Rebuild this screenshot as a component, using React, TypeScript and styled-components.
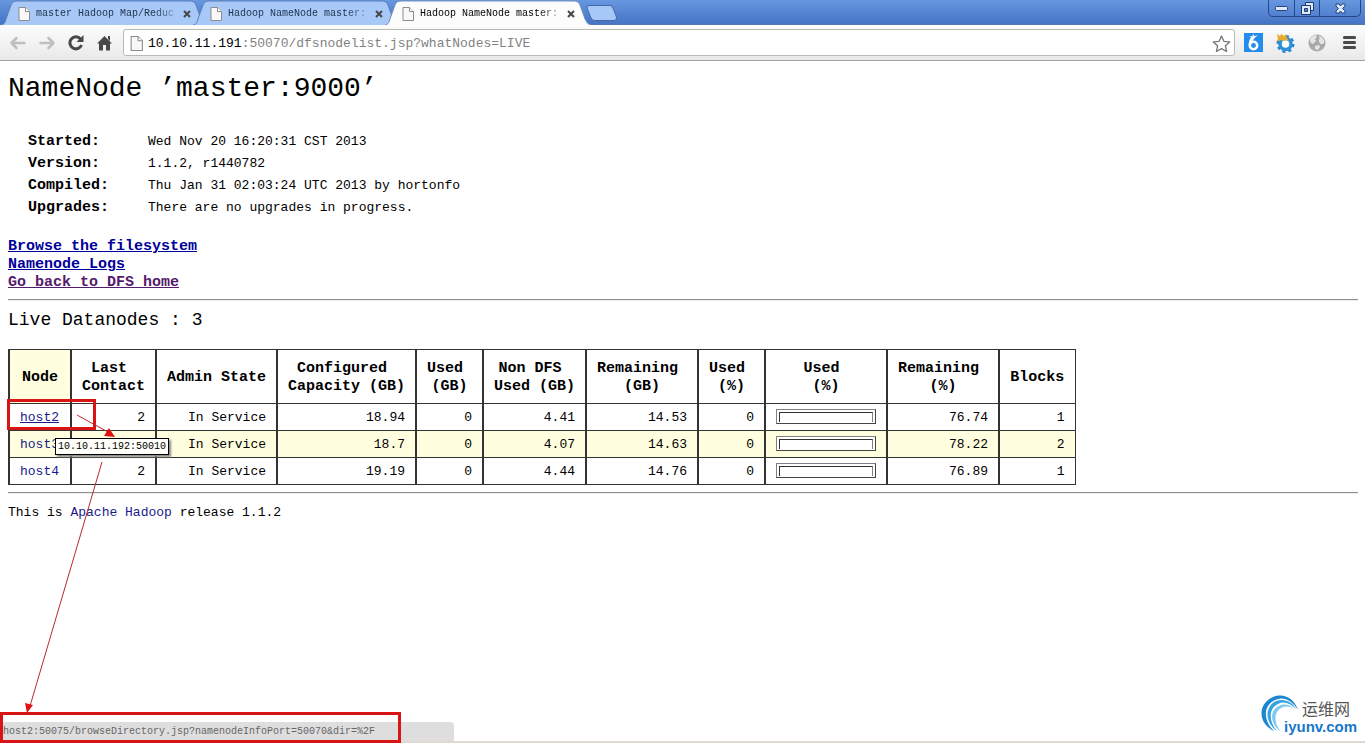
import React from 'react';
import styled, { createGlobalStyle, css } from 'styled-components';

const GlobalStyle = createGlobalStyle`
  * { box-sizing: border-box; }
  html, body { margin: 0; padding: 0; background: #fff; }
  body { font-family: "Liberation Mono", "Noto Sans CJK SC", monospace; font-size: 13px; line-height: 18px; color: #000; }
  button, input { font-family: inherit; }
`;

const Window = styled.div`
  position: relative;
  min-height: 100vh;
  display: flex;
  flex-direction: column;
  overflow: hidden;
`;

const TitleBar = styled.header`
  display: flex;
  justify-content: space-between;
  align-items: flex-start;
  height: 25px;
  padding-left: 1px;
  background: linear-gradient(#6797df, #4674c6);
  border-bottom: 1px solid #5877a8;
`;

const TabStrip = styled.nav`
  display: flex;
  height: 25px;
`;

const Tab = styled.div<{ $active?: boolean }>`
  position: relative;
  z-index: ${p => (p.$active ? 2 : 1)};
  display: flex;
  align-items: center;
  gap: 6px;
  width: 206px;
  height: 25px;
  margin-right: -14px;
  padding: 2px 14px 0 17px;
  font-size: 10px;
  line-height: 14px;
  color: ${p => (p.$active ? '#000' : '#223550')};
`;

const TabShape = styled.svg`
  position: absolute;
  inset: 0;
  width: 100%;
  height: 100%;
`;

const TabTitle = styled.a`
  position: relative;
  flex: 1;
  white-space: nowrap;
  color: inherit;
  text-decoration: none;
  mask-image: linear-gradient(to right, #000 85%, rgba(0, 0, 0, 0.3));
`;

const iconButton = css`
  display: flex;
  align-items: center;
  justify-content: center;
  padding: 0;
  border: 0;
  background: none;
`;

const TabClose = styled.button`
  ${iconButton}
  position: relative;
  width: 12px;
  height: 16px;
`;

const NewTab = styled.button`
  ${iconButton}
  width: 34px;
  height: 20px;
  margin: 3px 0 0 8px;
`;

const WindowControls = styled.div`
  display: flex;
  height: 17px;
  margin-right: 4px;
  border: 1px solid #26468a;
  border-top: 0;
  border-radius: 0 0 5px 5px;
`;

const WindowButton = styled.button<{ $wide?: boolean }>`
  ${iconButton}
  width: ${p => (p.$wide ? 41 : 25)}px;
  & + & { border-left: 1px solid #26468a; }
`;

const Toolbar = styled.div`
  display: flex;
  align-items: center;
  height: 36px;
  padding: 0 6px 0 8px;
  gap: 8px;
  background: linear-gradient(#fcfcfc, #e9e9e9);
  border-bottom: 1px solid #a3a3a3;
`;

const NavButtons = styled.div`
  display: flex;
  gap: 9px;
`;

const ToolButton = styled.button`
  ${iconButton}
  width: 20px;
  height: 20px;
`;

const AddressBox = styled.form`
  position: relative;
  flex: 1;
  display: flex;
  align-items: center;
  gap: 5px;
  height: 27px;
  padding: 2px 3px 0 6px;
  background: #fff;
  border: 1px solid #b9bab2;
  border-radius: 3px;
`;

const AddressField = styled.div`
  position: relative;
  flex: 1;
  line-height: 20px;
  color: #828282;
`;

const AddressInput = styled.input`
  position: absolute;
  inset: 0;
  width: 100%;
  padding: 0;
  border: 0;
  outline: 0;
  background: transparent;
  color: transparent;
  font-size: 13px;
`;

const HostPart = styled.span`
  color: #000;
`;

const Extensions = styled.div`
  display: flex;
  gap: 12px;
`;

const Page = styled.main`
  flex: 1;
  padding: 8px 7px 0 8px;
`;

const Title = styled.h1`
  margin: 0 0 22px;
  font-size: 28px;
  line-height: 40px;
  font-weight: normal;
`;

const InfoTable = styled.table`
  margin: 0 0 19px 20px;
  border-collapse: collapse;
`;

const InfoLabel = styled.th`
  width: 120px;
  padding: 0;
  font-size: 15px;
  line-height: 22px;
  text-align: left;
`;

const InfoValue = styled.td`
  padding: 0;
  line-height: 22px;
`;

const Links = styled.nav`
  display: flex;
  flex-direction: column;
  align-items: flex-start;
`;

const PageLink = styled.a<{ $visited?: boolean }>`
  font-size: 15px;
  line-height: 18px;
  font-weight: bold;
  color: ${p => (p.$visited ? '#551a6b' : '#00009c')};
`;

const Rule = styled.hr`
  height: 2px;
  margin: 7px 0;
  border: 0;
  border-top: 1px solid #8f8f8f;
  border-bottom: 1px solid #eee;
`;

const SectionTitle = styled.h2`
  margin: 0 0 17px;
  font-size: 18px;
  line-height: 24px;
  font-weight: normal;
`;

const NodeTable = styled.table`
  width: 1066px;
  table-layout: fixed;
  border-collapse: collapse;
  border: 1px solid #333;
`;

const HeadCell = styled.th<{ $sorted?: boolean }>`
  height: 54px;
  padding: 2px 0 0;
  border: 1px solid #333;
  border-width: 1px 1px 1px 2px;
  background: ${p => (p.$sorted ? '#ffffe0' : '#fff')};
  font-size: 15px;
  line-height: 18px;
  white-space: pre;
`;

const NodeRow = styled.tr<{ $shaded?: boolean }>`
  background: ${p => (p.$shaded ? '#ffffe0' : '#fff')};
`;

const Cell = styled.td<{ $left?: boolean }>`
  height: 27px;
  padding: 2px 10px 0;
  border: 1px solid #333;
  border-left-width: 2px;
  line-height: 18px;
  text-align: ${p => (p.$left ? 'left' : 'right')};
  white-space: nowrap;
`;

const NodeLink = styled.a<{ $hovered?: boolean }>`
  color: #1a1a8c;
  text-decoration: ${p => (p.$hovered ? 'underline' : 'none')};
`;

const Gauge = styled.div`
  height: 15px;
  margin: 0 0 4px;
  padding: 2px;
  border: 1px solid #444;
  border-top-color: #808080;
  border-left-color: #808080;
  background: #fff;
`;

const GaugeInner = styled.div`
  height: 10px;
  border: 1px solid #808080;
  border-top-color: #333;
  border-left-color: #333;
  border-bottom: 0;
`;

const Footer = styled.p`
  margin: 0;
  padding-top: 3px;
`;

const BottomEdge = styled.div`
  height: 2px;
  background: #ded9d2;
`;

const Tooltip = styled.div`
  position: absolute;
  left: 55px;
  top: 438px;
  padding: 0 2px;
  border: 1px solid #000;
  background: #fffffa;
  box-shadow: 2px 2px 2px #888;
  font-size: 10px;
  line-height: 15px;
`;

const StatusBubble = styled.div`
  position: absolute;
  left: 0;
  bottom: 2px;
  width: 454px;
  height: 19px;
  padding-left: 3px;
  border-radius: 0 4px 0 0;
  background: #dedede;
  color: #666;
  font-size: 10px;
  line-height: 19px;
  white-space: nowrap;
`;

const Mark = styled.div<{ $x: number; $w: number; $h: number }>`
  position: absolute;
  left: ${p => p.$x}px;
  width: ${p => p.$w}px;
  height: ${p => p.$h}px;
  border: 3px solid #d81414;
  pointer-events: none;
`;

const HostMark = styled(Mark)`
  top: 399px;
`;

const StatusMark = styled(Mark)`
  bottom: 0;
`;

const Arrows = styled.svg`
  position: absolute;
  left: 0;
  top: 0;
  pointer-events: none;
`;

const Watermark = styled.svg`
  position: absolute;
  right: 4px;
  bottom: 4px;
`;

const DocSvg = styled.svg`
  position: relative;
  flex: none;
`;

const DocIcon = ({ h = 14 }: { h?: number }) => (
  <DocSvg width={h - 2} height={h} viewBox="0 0 12 14">
    <path d="M1 .5h6.5l4 4v9H1z" fill="#f8f8f8" stroke="#8c8c8c" />
    <path d="M7.5.5v4h4" fill="#fff" stroke="#8c8c8c" />
  </DocSvg>
);

const tabs = [
  { title: 'master Hadoop Map/Reduc', active: false },
  { title: 'Hadoop NameNode master:', active: false },
  { title: 'Hadoop NameNode master:', active: true },
];

const info = [
  ['Started:', 'Wed Nov 20 16:20:31 CST 2013'],
  ['Version:', '1.1.2, r1440782'],
  ['Compiled:', 'Thu Jan 31 02:03:24 UTC 2013 by hortonfo'],
  ['Upgrades:', 'There are no upgrades in progress.'],
];

const columns: [string, number][] = [
  ['Node', 62],
  ['Last \nContact', 85],
  ['Admin State', 121],
  ['Configured \nCapacity (GB)', 139],
  ['Used \n(GB)', 67],
  ['Non DFS \nUsed (GB)', 103],
  ['Remaining \n(GB)', 112],
  ['Used \n(%)', 67],
  ['Used \n(%)', 122],
  ['Remaining \n(%)', 112],
  ['Blocks', 76],
];

const nodes = [
  { name: 'host2', cells: ['2', 'In Service', '18.94', '0', '4.41', '14.53', '0'], rest: ['76.74', '1'] },
  { name: 'host3', cells: ['', 'In Service', '18.7', '0', '4.07', '14.63', '0'], rest: ['78.22', '2'] },
  { name: 'host4', cells: ['2', 'In Service', '19.19', '0', '4.44', '14.76', '0'], rest: ['76.89', '1'] },
];

const BrowserTab = ({ title, active }: { title: string; active: boolean }) => (
  <Tab $active={active}>
    <TabShape viewBox="0 0 206 25" preserveAspectRatio="none">
      <path
        d="M0 25C4 24 4 22 5 19L10 5Q11 1 15 1H190Q194 1 195 5L200 19C202 22 202 24 206 25"
        fill={active ? '#fcfcfc' : '#a8c9f8'}
        stroke={active ? '#708fbd' : '#587fb9'}
      />
    </TabShape>
    <DocIcon />
    <TabTitle href="#">{title}</TabTitle>
    <TabClose aria-label="Close tab">
      <svg width="8" height="8" viewBox="0 0 8 8" stroke="#474747" strokeWidth="2">
        <path d="M1 1l6 6M7 1L1 7" />
      </svg>
    </TabClose>
  </Tab>
);

export default function App() {
  return (
    <Window>
      <GlobalStyle />
      <TitleBar>
        <TabStrip>
          {tabs.map((t, i) => <BrowserTab key={i} {...t} />)}
          <NewTab aria-label="New tab">
            <svg width="34" height="20" viewBox="0 0 34 20">
              <path d="M4 2.5H25Q27 2.5 28 5L31.500 14Q32 17.500 29 17.500H10Q7 17.500 6 15L2 5Q1.500 2.500 4 2.500Z" fill="#a5c8f8" stroke="#4468a6" />
            </svg>
          </NewTab>
        </TabStrip>
        <WindowControls>
          <WindowButton aria-label="Minimize">
            <svg width="13" height="6" viewBox="0 0 13 6"><rect x=".5" y="1.500" width="12" height="4" rx="1" fill="#dfe9fa" stroke="#24447c" /></svg>
          </WindowButton>
          <WindowButton aria-label="Restore">
            <svg width="13" height="13" viewBox="0 0 13 13" stroke="#1f3c70" fill="#dfe9fa">
              <path d="M4.500.5h8v8h-8z" /><path d="M.5 3.500h9v9h-9z" /><path d="M3.500 6.500h3v3h-3z" fill="#5c88d4" />
            </svg>
          </WindowButton>
          <WindowButton $wide aria-label="Close">
            <svg width="13" height="11" viewBox="0 0 13 11" fill="none">
              <path d="M2 1h3l1.500 2L8 1h3v2L8.500 5.500 11 8v2H8L6.500 8 5 10H2V8l2.500-2.500L2 3z" fill="#dfe9fa" stroke="#24447c" />
            </svg>
          </WindowButton>
        </WindowControls>
      </TitleBar>

      <Toolbar>
        <NavButtons>
          <ToolButton aria-label="Back">
            <svg width="18" height="14" viewBox="0 0 18 14" fill="none" stroke="#bfbfbf" strokeWidth="2.500" strokeLinecap="round" strokeLinejoin="round"><path d="M7.500 2L2.500 7l5 5M3 7H15.500" /></svg>
          </ToolButton>
          <ToolButton aria-label="Forward">
            <svg width="18" height="14" viewBox="0 0 18 14" fill="none" stroke="#bfbfbf" strokeWidth="2.500" strokeLinecap="round" strokeLinejoin="round"><path d="M10.500 2l5 5-5 5M15 7H2.500" /></svg>
          </ToolButton>
          <ToolButton aria-label="Reload">
            <svg width="16" height="16" viewBox="0 0 16 16"><path d="M12.500 4A6 6 0 1 0 13.500 10" fill="none" stroke="#484848" strokeWidth="3" /><path d="M15.500 0v7H8.500z" fill="#484848" /></svg>
          </ToolButton>
          <ToolButton aria-label="Home">
            <svg width="16" height="16" viewBox="0 0 16 16" fill="#484848"><path d="M7.500 1l7.500 7.500h-2v7H9V10H6v5.500H2v-7H0z" /><path d="M11 1h2v5L11 4z" /></svg>
          </ToolButton>
        </NavButtons>
        <AddressBox>
          <DocIcon h={15} />
          <AddressField>
            <HostPart>10.10.11.191</HostPart>:50070/dfsnodelist.jsp?whatNodes=LIVE
            <AddressInput aria-label="Address" />
          </AddressField>
          <ToolButton type="button" aria-label="Bookmark">
            <svg width="19" height="18" viewBox="0 0 19 18"><path d="M9.500 1l2.400 5.300 5.800.6-4.300 3.900 1.200 5.700-5.100-2.900-5.100 2.900 1.200-5.700L1.300 6.900l5.800-.6z" fill="#fff" stroke="#777" strokeWidth="1.300" strokeLinejoin="round" /></svg>
          </ToolButton>
        </AddressBox>
        <Extensions>
          <ToolButton aria-label="Download helper">
            <svg width="19" height="19" viewBox="0 0 19 19">
              <path d="M0 0h19v19H0z" fill="#238cec" />
              <circle cx="9.500" cy="12.500" r="3.700" fill="none" stroke="#fff" strokeWidth="2.500" />
              <path d="M4.600 13C4.500 9 5.500 6.500 7 4.500L5.500 3l3 .5L9 1l1.500 2L14 2.500C10.500 4.500 8.500 7 7.500 10z" fill="#fff" />
            </svg>
          </ToolButton>
          <ToolButton aria-label="Settings extension">
            <svg width="20" height="20" viewBox="0 0 20 20">
              <circle cx="10.500" cy="11" r="7.500" fill="none" stroke="#2387cf" strokeWidth="3" strokeDasharray="3 2.890" />
              <circle cx="10.500" cy="11" r="5.500" fill="#fff" stroke="#2b91d8" strokeWidth="3.500" />
              <path d="M2 1l3 2 1-2 3 2 2-2 1 4 2 3-4-1-2 1-3-1-4 2 2-3z" fill="#e9a92c" />
            </svg>
          </ToolButton>
          <ToolButton aria-label="Globe extension">
            <svg width="18" height="18" viewBox="0 0 18 18">
              <circle cx="9" cy="9" r="8.500" fill="#a9a9a9" />
              <path d="M1.500 6C3 3 5 1.500 8 1l1 2-2 2 1 2-3 3-2-1zM11 2l3 1 2.500 4-1 3-3 0-2-3 1-2zM7 12l4-1 1 2-2 3-3-1z" fill="#e4e4e4" />
            </svg>
          </ToolButton>
          <ToolButton aria-label="Menu">
            <svg width="13" height="13" viewBox="0 0 13 13" fill="#4b4b4b"><path d="M1 0h11q1 0 1 1.500T12 3H1Q0 3 0 1.500T1 0zM1 5h11q1 0 1 1.500T12 8H1Q0 8 0 6.500T1 5zM1 10h11q1 0 1 1.500T12 13H1Q0 13 0 11.500T1 10z" /></svg>
          </ToolButton>
        </Extensions>
      </Toolbar>

      <Page>
        <Title>NameNode ’master:9000’</Title>
        <InfoTable>
          <tbody>
            {info.map(([label, value]) => (
              <tr key={label}>
                <InfoLabel scope="row">{label}</InfoLabel>
                <InfoValue>{value}</InfoValue>
              </tr>
            ))}
          </tbody>
        </InfoTable>
        <Links>
          <PageLink href="#">Browse the filesystem</PageLink>
          <PageLink href="#">Namenode Logs</PageLink>
          <PageLink href="#" $visited>Go back to DFS home</PageLink>
        </Links>
        <Rule />
        <SectionTitle>Live Datanodes : 3</SectionTitle>
        <NodeTable>
          <colgroup>
            {columns.map(([, width], i) => <col key={i} style={{ width }} />)}
          </colgroup>
          <thead>
            <tr>
              {columns.map(([label], i) => <HeadCell key={i} scope="col" $sorted={i === 0}>{label}</HeadCell>)}
            </tr>
          </thead>
          <tbody>
            {nodes.map((node, row) => (
              <NodeRow key={node.name} $shaded={row === 1}>
                <Cell $left><NodeLink href="#" $hovered={row === 0}>{node.name}</NodeLink></Cell>
                {node.cells.map((value, i) => <Cell key={i}>{value}</Cell>)}
                <Cell><Gauge><GaugeInner /></Gauge></Cell>
                {node.rest.map((value, i) => <Cell key={i}>{value}</Cell>)}
              </NodeRow>
            ))}
          </tbody>
        </NodeTable>
        <Rule />
        <Footer>This is <NodeLink href="#">Apache Hadoop</NodeLink> release 1.1.2</Footer>
      </Page>
      <BottomEdge />

      <StatusBubble>host2:50075/browseDirectory.jsp?namenodeInfoPort=50070&amp;dir=%2F</StatusBubble>
      <Tooltip role="tooltip">10.10.11.192:50010</Tooltip>
      <HostMark $x={7} $w={89} $h={31} />
      <StatusMark $x={0} $w={401} $h={31} />
      <Arrows width="130" height="720" viewBox="0 0 130 720" stroke="#b82a2a" fill="#e01010">
        <path d="M77 415L108 432M102 462L30 706" fill="none" />
        <path d="M115 437l-11-1 5-8zM27 713l-2-10 8 2z" stroke="none" />
      </Arrows>
      <Watermark width="100" height="46" viewBox="0 0 100 46">
        <path d="M13 38C-4 30-3 10 12 4C24-1 34 7 37 17C31 7 22 3 14 7C2 12 2 28 13 38Z" fill="#1c86cf" />
        <path d="M16 38C3 29 4 13 15 8C24 5 31 9 35 16C29 10 23 8 17 11C8 15 7 28 16 38Z" fill="#35a5e2" />
        <path d="M20 39C8 30 9 17 18 13C24 10 29 12 33 16C28 13 24 13 20 15C13 19 12 29 20 39Z" fill="#7cc8ef" />
        <text x="41" y="22" fontFamily="Noto Sans CJK SC, sans-serif" fontSize="16" fill="#555">运维网</text>
        <text x="23" y="39" fontFamily="Liberation Sans, sans-serif" fontSize="15" fontWeight="bold" fill="#1878c8">iyunv.com</text>
      </Watermark>
    </Window>
  );
}
